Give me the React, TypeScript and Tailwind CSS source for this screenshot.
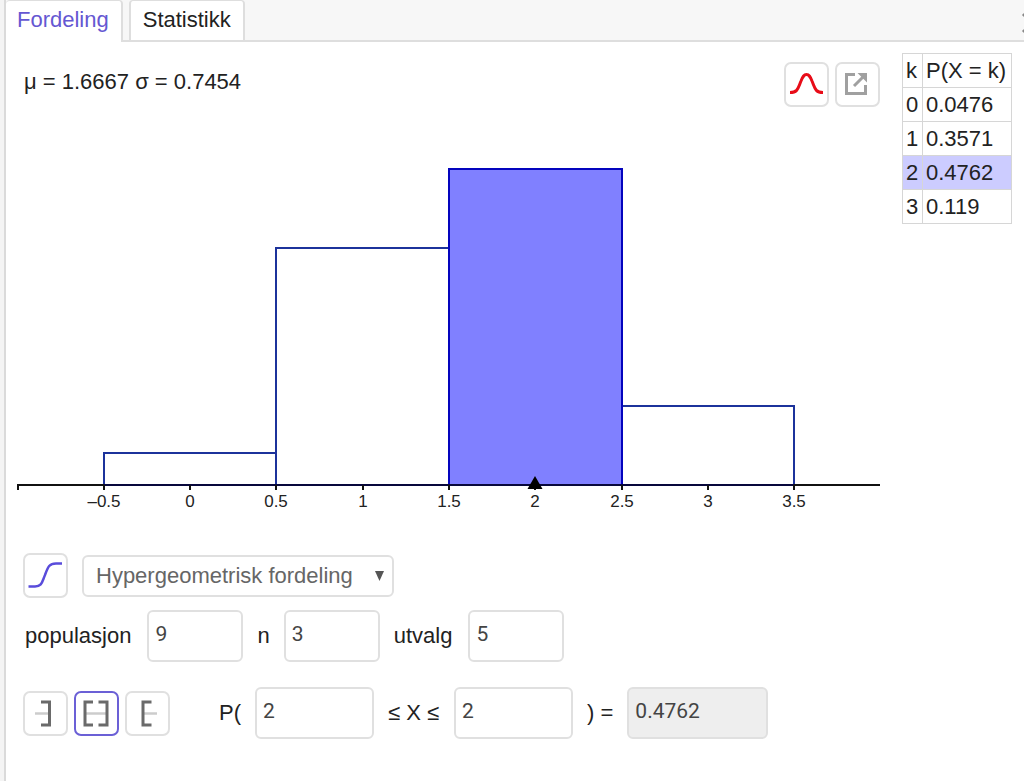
import React, { useState } from "react";

const outcomes = [
  { k: 0, p: 0.0476 },
  { k: 1, p: 0.3571 },
  { k: 2, p: 0.4762 },
  { k: 3, p: 0.119 },
];

const ticks = ["", "–0.5", "0", "0.5", "1", "1.5", "2", "2.5", "3", "3.5"];

const BASE = 386;
const UNIT = 172.6;
const toX = (x: number) => Math.round(173 + x * UNIT);
const toY = (p: number) => Math.round(BASE - p * 663);

function Histogram() {
  const selected = outcomes[2];
  return (
    <svg
      viewBox="0 0 863 420"
      className="block w-full"
      role="img"
      aria-label="Hypergeometrisk fordeling"
    >
      {outcomes.map((o) => (
        <rect
          key={o.k}
          x={toX(o.k - 0.5)}
          y={toY(o.p)}
          width={toX(o.k + 0.5) - toX(o.k - 0.5)}
          height={BASE - toY(o.p)}
          fill="none"
          stroke="#1c329b"
          strokeWidth="2"
        />
      ))}
      <rect
        x={toX(selected.k - 0.5)}
        y={toY(selected.p)}
        width={toX(selected.k + 0.5) - toX(selected.k - 0.5)}
        height={BASE - toY(selected.p)}
        fill="#8080ff"
        stroke="#0404bd"
        strokeWidth="2"
      />
      <path d={`M0 ${BASE}H863`} stroke="#111" strokeWidth="2" />
      <path d={`M${toX(-0.5)} ${BASE}H${toX(3.5)}`} stroke="#08083c" strokeWidth="2" />
      {ticks.map((label, i) => {
        const x = Math.max(1, toX(-1 + i / 2));
        return (
          <g key={i}>
            <path d={`M${x} ${BASE}v5`} stroke="#111" strokeWidth="2" />
            <text
              x={x}
              y={BASE + 22}
              textAnchor="middle"
              fill="#222"
              className="font-['Liberation_Sans',sans-serif] text-[17px]"
            >
              {label}
            </text>
          </g>
        );
      })}
      <path d={`M${toX(2)} ${BASE - 9}l7.500 13h-15z`} fill="#000" />
    </svg>
  );
}

const iconButton =
  "flex size-[45px] shrink-0 items-center justify-center rounded-[7px] border-2 bg-white";

const field =
  "h-[52px] rounded-md border-2 border-[#e0e0e0] pl-1.5 pb-1 font-[Roboto,sans-serif] text-[21px] text-[#444] outline-none";

const cell = "border border-[#d6d6d6] px-[3px] py-0 font-normal";

export default function App() {
  const [mode, setMode] = useState("interval");
  const modes = [
    { id: "left", label: "Venstresidig", dark: "M18 11h8.500v23h-8.500", light: "M12 22.500h14" },
    { id: "interval", label: "Intervall", dark: "M19 11h-8v23h8M24.500 11h8.500v23h-8.500", light: "M12 22.500h20" },
    { id: "right", label: "Høyresidig", dark: "M26.500 11h-8.500v23h8.500", light: "M19 22.500h13" },
  ];

  return (
    <div className="flex min-h-screen overflow-hidden bg-white font-['Liberation_Sans',Arial,sans-serif] text-[22px] leading-7 text-[#222]">
      <div className="w-1.5 shrink-0 border-r-2 border-[#dadada] bg-[#f4f4f4]" />
      <div className="min-w-0 flex-1">
        <header className="flex h-[42px] items-stretch bg-[#f7f7f7]">
          <nav className="flex items-stretch" role="tablist">
            <button
              role="tab"
              aria-selected="true"
              className="rounded-t-sm border-t border-r-2 border-[#dedede] bg-white pr-3 pb-1 pl-[11px] text-[#6557d2]"
            >
              Fordeling
            </button>
            <span className="w-1.5 border-b-2 border-[#dedede]" />
            <button
              role="tab"
              aria-selected="false"
              className="rounded-t-sm border-t border-r-2 border-b-2 border-l-2 border-[#dedede] bg-white px-3 pb-0.5"
            >
              Statistikk
            </button>
          </nav>
          <div className="flex flex-1 items-center justify-end overflow-hidden border-b-2 border-[#dedede]">
            <button aria-label="Lukk" className="-mr-[19px] shrink-0 pt-1.5">
              <svg width="22" height="22" viewBox="0 0 22 22" fill="none" stroke="#888" strokeWidth="3">
                <path d="M2 2l18 18M20 2L2 20" />
              </svg>
            </button>
          </div>
        </header>

        <main className="pr-3 pl-[11px]">
          <div className="flex items-start gap-[22px]">
            <section className="min-w-0 flex-1 pt-5">
              <div className="flex items-start justify-between pl-[7px]">
                <p className="pt-1.5">μ = 1.6667 σ = 0.7454</p>
                <div className="flex gap-1.5">
                  <button aria-label="Normalkurve" className={`${iconButton} border-[#e0e0e0]`}>
                    <svg className="shrink-0" width="41" height="41" viewBox="0 0 41 41" fill="none" stroke="#e80c18" strokeWidth="3">
                      <path d="M4 28.500C12 28.500 12 24 15 17C17 12 18 10.500 20.500 10.500S24 12 26 17C29 24 29 28.500 37 28.500" />
                    </svg>
                  </button>
                  <button aria-label="Eksporter" className={`${iconButton} border-[#e0e0e0]`}>
                    <svg className="shrink-0" width="41" height="41" viewBox="0 0 41 41" fill="none" stroke="#a0a0a0" strokeWidth="3">
                      <path d="M18 10.500H9.500V29.500H28.500V21M17 22L27 12" />
                      <path d="M20.500 9H30V18.500Z" fill="#a0a0a0" stroke="none" />
                    </svg>
                  </button>
                </div>
              </div>
              <div className="-mt-2">
                <Histogram />
              </div>
            </section>
            <table className="mt-[11px] w-[110px] shrink-0 border-collapse text-left">
              <thead>
                <tr className="h-[34px]">
                  <th className={`${cell} w-5`}>k</th>
                  <th className={cell}>P(X = k)</th>
                </tr>
              </thead>
              <tbody>
                {outcomes.map((o) => (
                  <tr key={o.k} className={o.k === 2 ? "h-[34px] bg-[#ccccff]" : "h-[34px]"}>
                    <td className={cell}>{o.k}</td>
                    <td className={cell}>{o.p}</td>
                  </tr>
                ))}
              </tbody>
            </table>
          </div>

          <section className="pl-1.5">
            <div className="flex items-center gap-3.5 pt-[34px]">
              <button aria-label="Kumulativ" className={`${iconButton} border-[#e0e0e0]`}>
                <svg className="shrink-0" width="41" height="41" viewBox="0 0 41 41" fill="none" stroke="#594cdb" strokeWidth="2.500">
                  <path d="M3.500 31.500H10C17 31.500 17 27 20 20C23 12 24 8.500 31 8.500H37" />
                </svg>
              </button>
              <div className="relative">
                <select
                  aria-label="Fordeling"
                  className="h-[42px] w-[312px] appearance-none rounded-md border-2 border-[#e0e0e0] bg-white pl-3 text-[#666] outline-none"
                >
                  <option>Hypergeometrisk fordeling</option>
                </select>
                <svg className="pointer-events-none absolute top-4 right-2.5" width="9" height="10" viewBox="0 0 9 10">
                  <path d="M0 0h9L4.500 10z" fill="#555" />
                </svg>
              </div>
            </div>

            <div className="flex items-center pt-3">
              <label htmlFor="population" className="pr-4 pl-0.5">populasjon</label>
              <input id="population" defaultValue="9" className={`${field} w-24`} />
              <label htmlFor="successes" className="px-[14px]">n</label>
              <input id="successes" defaultValue="3" className={`${field} w-24`} />
              <label htmlFor="sample" className="pr-4 pl-[14px]">utvalg</label>
              <input id="sample" defaultValue="5" className={`${field} w-24`} />
            </div>

            <div className="flex items-center pt-[25px]">
              <div className="flex gap-1.5">
                {modes.map((m) => (
                  <button
                    key={m.id}
                    aria-label={m.label}
                    aria-pressed={mode === m.id}
                    onClick={() => setMode(m.id)}
                    className={`${iconButton} ${mode === m.id ? "border-[#6b60d6]" : "border-[#e0e0e0]"}`}
                  >
                    <svg className="shrink-0" width="45" height="45" viewBox="0 0 45 45" fill="none">
                      <path d={m.light} stroke="#ccc" strokeWidth="2.500" />
                      <path d={m.dark} stroke="#6a6a6a" strokeWidth="3" />
                    </svg>
                  </button>
                ))}
              </div>
              <label htmlFor="low" className="pr-[14px] pl-[49px]">P(</label>
              <input id="low" defaultValue="2" className={`${field} w-[119px]`} />
              <label htmlFor="high" className="pr-[15px] pl-[14px]">≤ X ≤</label>
              <input id="high" defaultValue="2" className={`${field} w-[119px]`} />
              <label htmlFor="result" className="px-[14px]">) =</label>
              <input id="result" readOnly value="0.4762" className={`${field} w-[141px] bg-[#eee]`} />
            </div>
          </section>
        </main>
      </div>
    </div>
  );
}
